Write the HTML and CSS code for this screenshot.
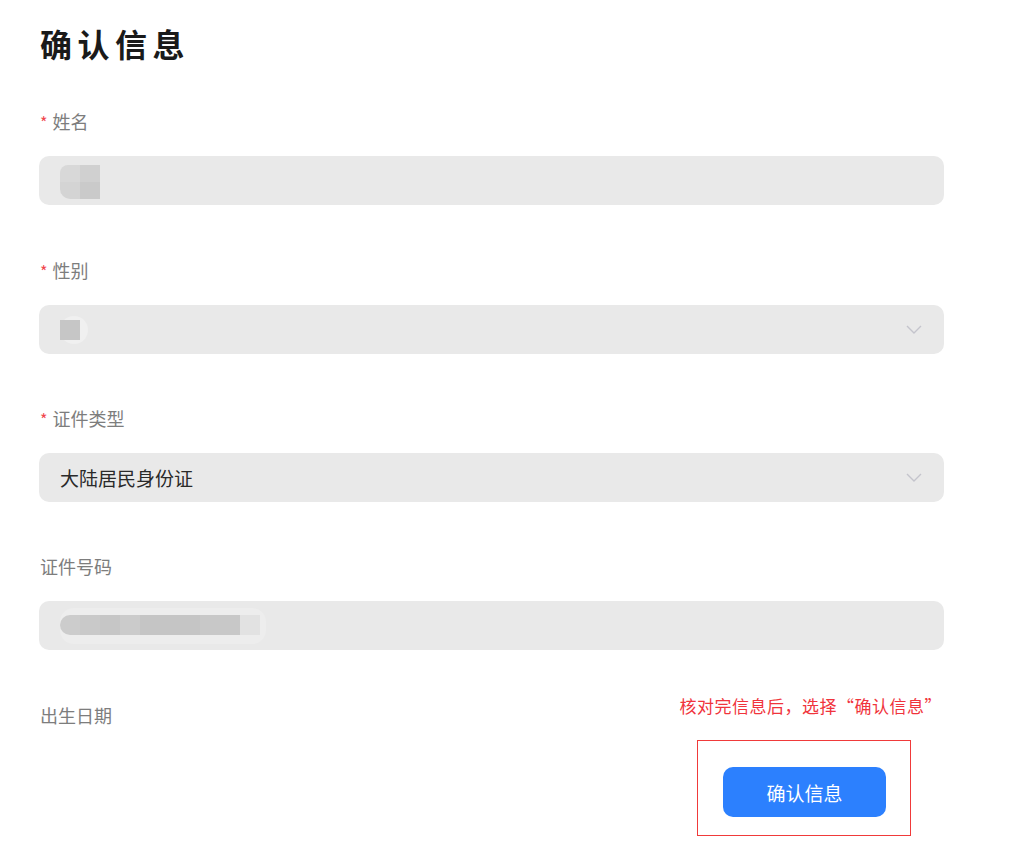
FILE: index.html
```html
<!DOCTYPE html>
<html lang="zh-CN">
<head>
<meta charset="utf-8">
<title>确认信息</title>
<link rel="stylesheet" href="styles.css">
</head>
<body>
<div class="page">
  <h1 class="title">确认信息</h1>

  <div class="field">
    <div class="label"><span class="req">*</span>姓名</div>
    <div class="input">
      <div class="blur-name">
        <span class="c1"></span><span class="c2"></span><span class="c3"></span><span class="c4"></span>
      </div>
    </div>
  </div>

  <div class="field">
    <div class="label"><span class="req">*</span>性别</div>
    <div class="input select">
      <div class="blur-gender"><span class="halo"></span><span class="sq"></span></div>
      <svg class="chevron" width="16" height="9" viewBox="0 0 16 9"><path d="M1 1 L8 8 L15 1" fill="none" stroke="#c4c4cc" stroke-width="1.4"/></svg>
    </div>
  </div>

  <div class="field">
    <div class="label"><span class="req">*</span>证件类型</div>
    <div class="input select">
      <span class="value">大陆居民身份证</span>
      <svg class="chevron" width="16" height="9" viewBox="0 0 16 9"><path d="M1 1 L8 8 L15 1" fill="none" stroke="#c4c4cc" stroke-width="1.4"/></svg>
    </div>
  </div>

  <div class="field">
    <div class="label">证件号码</div>
    <div class="input">
      <div class="blur-id">
        <span class="k" style="background:#cccccc;width:20px"></span>
        <span class="k" style="background:#c9c9c9;width:20px"></span>
        <span class="k" style="background:#c6c6c6;width:20px"></span>
        <span class="k" style="background:#cbcbcb;width:20px"></span>
        <span class="k" style="background:#c5c5c5;width:60px"></span>
        <span class="k" style="background:#c8c8c8;width:40px"></span>
        <span class="k" style="background:#e2e2e2;width:20px"></span>
      </div>
    </div>
  </div>

  <div class="last-row">
    <div class="label">出生日期</div>
    <div class="note">核对完信息后，选择“确认信息”</div>
  </div>

  <div class="action-wrap">
    <div class="highlight">
      <button class="btn" type="button">确认信息</button>
    </div>
  </div>
</div>
</body>
</html>
```

FILE: styles.css
```css
* { box-sizing: border-box; }
html, body { margin: 0; padding: 0; background: #ffffff; }
body {
  font-family: "Noto Sans CJK SC", "Noto Sans", "Liberation Sans", sans-serif;
  color: #333;
}
.page {
  width: 1012px;
  padding: 0 0 0 39px;
}
.title {
  margin: 0;
  padding-top: 20px;
  height: 68px;
  font-size: 32px;
  line-height: 46px;
  font-weight: 700;
  letter-spacing: 5.5px;
  color: #1a1a1a;
  padding-left: 1px;
}
.field {
  width: 905px;
  margin-top: 40px;
}
.field + .field { margin-top: 52px; }
.field:nth-child(4), .field:nth-child(5) { margin-top: 51px; }
.label {
  height: 26px;
  line-height: 26px;
  font-size: 18px;
  color: #7d7d7d;
  padding-left: 1px;
}
.req {
  color: #f0464e;
  font-size: 16px;
  margin-right: 5px;
}
.input {
  margin-top: 22px;
  height: 49px;
  border-radius: 10px;
  background: #e9e9e9;
  display: flex;
  align-items: center;
  padding: 0 21px;
  position: relative;
}
.select { justify-content: space-between; }
.value {
  font-size: 19px;
  color: #2a2a2a;
}
.chevron { margin-right: 1px; }

.blur-name {
  display: grid;
  grid-template-columns: 20px 20px;
  grid-template-rows: 17px 17px;
  border-radius: 8px 0 0 10px;
  overflow: hidden;
  margin-top: 2px;
}
.blur-name .c1 { background: #d8d8d8; }
.blur-name .c2 { background: #d0d0d0; }
.blur-name .c3 { background: #d4d4d4; }
.blur-name .c4 { background: #cacaca; }

.blur-gender {
  position: relative;
  width: 28px;
  height: 28px;
}
.blur-gender .halo {
  position: absolute;
  left: 0; top: 0;
  width: 28px; height: 28px;
  border-radius: 50%;
  background: #f0f0f0;
}
.blur-gender .sq {
  position: absolute;
  left: 0; top: 4px;
  width: 20px; height: 20px;
  background: #c6c6c6;
}

.blur-id {
  display: flex;
  height: 36px;
  padding: 7px 0 9px 0;
  width: 206px;
  background: #ededed;
  border-radius: 14px;
}
.blur-id .k { height: 20px; display: block; }
.blur-id .k:first-child { border-radius: 10px 0 0 10px; }

.last-row {
  width: 903px;
  margin-top: 45px;
  display: flex;
  justify-content: space-between;
  align-items: flex-start;
}
.last-row .label { margin-top: 7px; }
.note {
  font-size: 17px;
  line-height: 22px;
  color: #f0343c;
  letter-spacing: 0.5px;
}
.action-wrap {
  width: 872px;
  display: flex;
  justify-content: flex-end;
  margin-top: 12px;
}
.highlight {
  width: 214px;
  height: 96px;
  border: 1px solid #f03a3a;
  padding: 26px 0 0 25px;
}
.btn {
  width: 163px;
  height: 50px;
  border: none;
  border-radius: 10px;
  background: #2c80fe;
  color: #ffffff;
  font-family: "Noto Sans CJK SC", sans-serif;
  font-size: 19px;
  padding: 0;
  cursor: pointer;
}
```
